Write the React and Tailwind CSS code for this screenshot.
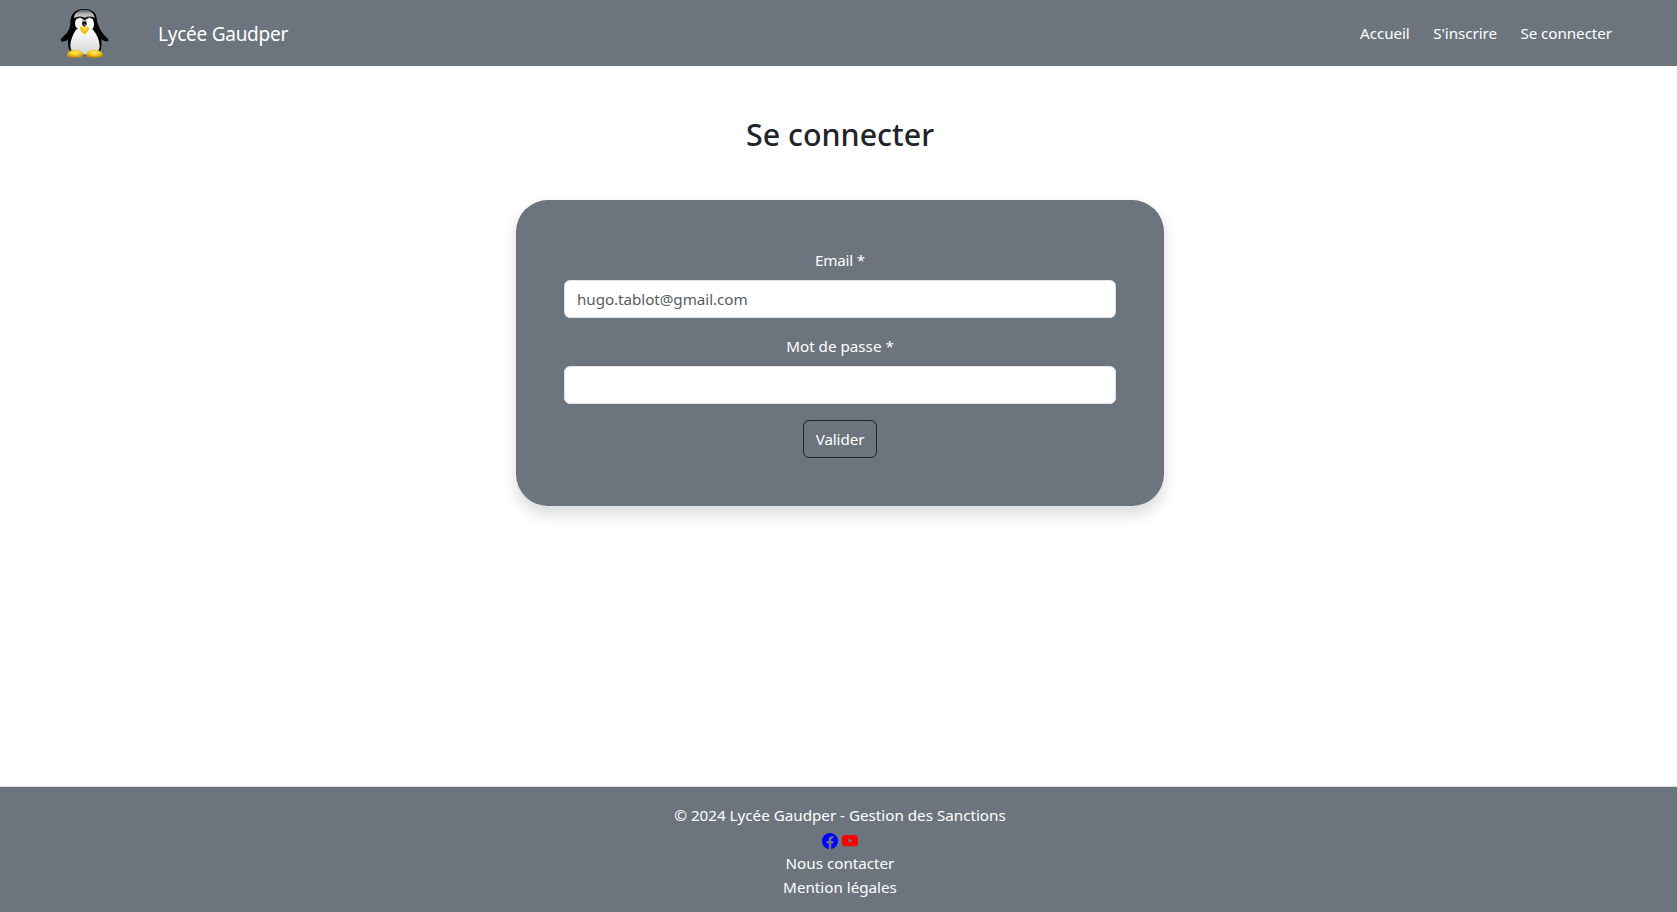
import { BsFacebook, BsYoutube } from "react-icons/bs";

function Tux() {
  return (
    <svg width="50" height="50" viewBox="0 0 150 150" className="mt-px" aria-hidden="true">
      <defs>
        <linearGradient id="belly" x1="0" y1="0" x2="0" y2="1">
          <stop offset="0" stopColor="#fff" />
          <stop offset="0.5" stopColor="#ececec" />
          <stop offset="1" stopColor="#d2d2d2" />
        </linearGradient>
        <linearGradient id="shine" x1="0" y1="0" x2="0" y2="1">
          <stop offset="0" stopColor="#555" />
          <stop offset="0.5" stopColor="#b0b0b0" />
          <stop offset="1" stopColor="#d4d4d4" />
        </linearGradient>
        <radialGradient id="foot" cx="0.5" cy="0.35" r="0.65">
          <stop offset="0" stopColor="#fff07a" />
          <stop offset="0.5" stopColor="#f4c81c" />
          <stop offset="1" stopColor="#bd8203" />
        </radialGradient>
      </defs>
      <path d="M72 0C44 0 32 16 31 40C31 55 27 62 21 71C15 79 5 84 2 92C1 99 12 99 24 92C23 112 27 125 36 131C52 141 100 141 117 131C125 122 126 107 124 90C132 98 140 99 145 95C147 89 134 82 128 73C121 63 117 54 113 43C109 28 111 18 101 9C94 3 84 0 72 0Z" fill="#060606" />
      <path d="M42 27C43 12 54 3 72 2C91 2 102 12 104 26Q88 19 74 26Q58 18 42 27Z" fill="url(#shine)" />
      <path d="M48 62C39 76 32 91 31 108C31 132 47 137 75 137C106 137 119 129 119 110C118 91 110 75 99 62C89 54 58 53 48 62Z" fill="url(#belly)" />
      <ellipse cx="59" cy="43" rx="14" ry="18" fill="#f7f7f7" />
      <ellipse cx="88" cy="45" rx="14" ry="20" fill="#fff" />
      <path d="M65 30Q73 36 81 30L81 47L67 47Z" fill="#bbb" />
      <path d="M46 29Q60 21 74 30Q89 22 102 29" fill="none" stroke="#222" strokeWidth="3" />
      <circle cx="73" cy="44" r="7" fill="#111" />
      <circle cx="74" cy="46" r="2" fill="#aaa" />
      <path d="M59 55Q73 48 89 57Q84 69 74 77Q62 71 59 55Z" fill="#f1bf18" />
      <path d="M62 56Q73 51 84 59L75 63Z" fill="#ffe654" />
      <path d="M21 138C21 129 31 123 45 123C59 123 70 131 70 138C70 146 58 146 45 146C30 146 21 146 21 138Z" fill="url(#foot)" />
      <path d="M78 138C79 129 90 123 104 123C119 123 129 131 129 138C128 146 117 146 103 146C89 146 78 146 78 138Z" fill="url(#foot)" />
    </svg>
  );
}

export default function App() {
  return (
    <div className="flex min-h-screen flex-col bg-white font-['Noto_Sans','Open_Sans',sans-serif] text-[15.2px] leading-6 text-white">
      <header className="flex h-[66px] items-center bg-[#6c757d] pr-[65px] pl-[60px]">
        <Tux />
        <a href="#" className="ml-12 pt-0.5 text-[19px] leading-[30px] tracking-[-0.25px]">Lycée Gaudper</a>
        <nav className="ml-auto flex gap-[23.5px] tracking-[-0.06px]">
          <a href="#">Accueil</a>
          <a href="#">S'inscrire</a>
          <a href="#">Se connecter</a>
        </nav>
      </header>

      <main className="flex grow flex-col items-center pl-[3px]">
        <h1 className="mt-[50px] text-[30.4px] leading-[38px] font-medium text-[#212529]">Se connecter</h1>
        <form className="mt-[46px] flex h-[306px] w-[648px] flex-col items-center rounded-[32px] bg-[#6c757d] p-12 shadow-[0_8px_16px_rgba(0,0,0,0.15)]">
          <label htmlFor="email" className="tracking-[-0.2px]">Email *</label>
          <input id="email" type="email" placeholder="hugo.tablot@gmail.com" className="mt-2 h-[38px] w-full rounded-md border border-[#dee2e6] bg-white px-3 tracking-[-0.05px] placeholder:text-[#595c5f]" />
          <label htmlFor="password" className="mt-4">Mot de passe *</label>
          <input id="password" type="password" className="mt-2 h-[38px] w-full rounded-md border border-[#dee2e6] bg-white px-3" />
          <button type="button" className="mt-4 h-[38px] w-[74px] rounded-md border border-[#212529] tracking-[-0.1px]">Valider</button>
        </form>
      </main>

      <footer className="flex h-[126px] flex-col items-center border-t border-[#dee2e6] bg-[#6c757d] pt-4 pl-[3px]">
        <p>© 2024 Lycée Gaudper - Gestion des Sanctions</p>
        <div className="flex h-6 items-end gap-1 pb-[2px]">
          <BsFacebook className="size-4 text-[#0000ff]" />
          <BsYoutube className="size-4 text-[#ff0000]" />
        </div>
        <a href="#">Nous contacter</a>
        <a href="#">Mention légales</a>
      </footer>
    </div>
  );
}
